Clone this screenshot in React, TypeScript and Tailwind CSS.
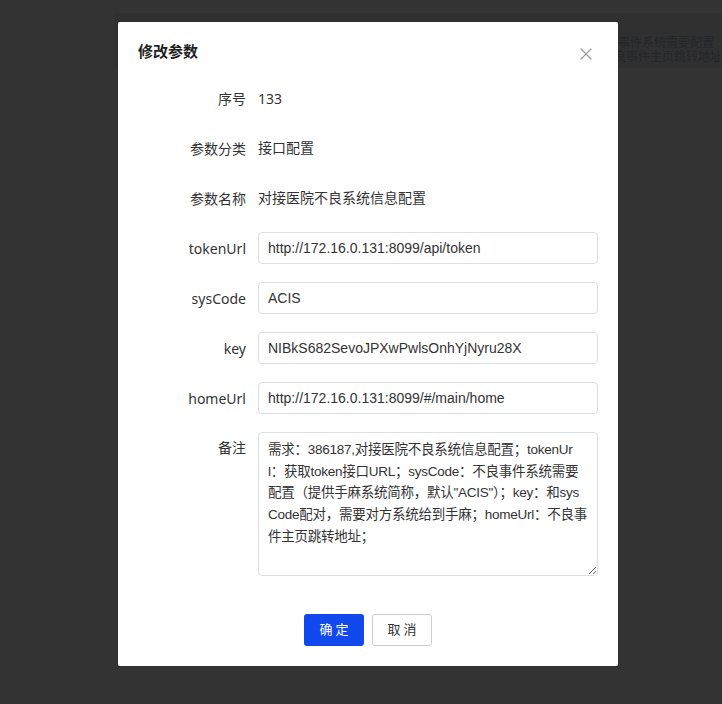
import { X } from "lucide-react";

const font = { fontFamily: '"Liberation Sans", "Noto Sans CJK SC", sans-serif' };
const labelFont = { fontFamily: '"Noto Sans", "Noto Sans CJK SC", sans-serif' };

const inputs = [
  { label: "tokenUrl", value: "http://172.16.0.131:8099/api/token" },
  { label: "sysCode", value: "ACIS" },
  { label: "key", value: "NIBkS682SevoJPXwPwlsOnhYjNyru28X" },
  { label: "homeUrl", value: "http://172.16.0.131:8099/#/main/home" },
];

// wrapped the way the original textarea wraps it
const remark = [
  "需求：386187,对接医院不良系统信息配置；tokenUr",
  "l：获取token接口URL；sysCode：不良事件系统需要",
  '配置（提供手麻系统简称，默认"ACIS"）；key：和sys',
  "Code配对，需要对方系统给到手麻；homeUrl：不良事",
  "件主页跳转地址；",
].join("\n");

export default function App() {
  return (
    <div className="relative w-[722px] h-[704px] overflow-hidden bg-[#333333]" style={font}>
      {/* dimmed page behind the mask */}
      <div className="ml-[115px] mt-[13px] h-[55px] bg-[#303030] flex">
        <div className="pl-[10px] pt-[7px] text-[18px] leading-6 text-[#1c1f27] whitespace-nowrap">
          对接医院不良系统信息配置
        </div>
        <div className="ml-auto w-[116px] pt-[23px] text-[12px] leading-[14px] text-[#24262b] whitespace-nowrap overflow-hidden">
          <div className="-ml-[12px]">不良事件系统需要配置</div>
          <div className="-ml-[4px]">不良事件主页跳转地址</div>
        </div>
      </div>

      {/* dialog */}
      <div className="absolute left-[118px] top-[22px] w-[500px] bg-white rounded-[2px]">
        <div className="px-5 pt-5">
          <h2 className="text-[15px] leading-5 font-bold text-[#1f1f1f]">修改参数</h2>
        </div>
        <button className="absolute right-[22px] top-[22px] text-[#9a9a9a]">
          <X size={20} strokeWidth={1.4} />
        </button>

        <div className="px-5 pt-5 text-[14px] text-[#333333]">
          <div className="flex items-center h-8 mb-[18px]">
            <div className="w-[120px] pr-3 text-right" style={labelFont}>序号</div>
            <div style={labelFont}>133</div>
          </div>
          <div className="flex items-center h-8 mb-[18px]">
            <div className="w-[120px] pr-3 text-right" style={labelFont}>参数分类</div>
            <div>接口配置</div>
          </div>
          <div className="flex items-center h-8 mb-[18px]">
            <div className="w-[120px] pr-3 text-right" style={labelFont}>参数名称</div>
            <div>对接医院不良系统信息配置</div>
          </div>

          {inputs.map((f) => (
            <div key={f.label} className="flex items-center h-8 mb-[18px]">
              <div className="w-[120px] pr-3 text-right" style={labelFont}>{f.label}</div>
              <input
                defaultValue={f.value}
                className="flex-1 h-8 px-[9px] border border-[#dcdfe6] rounded-[4px] text-[14px] text-[#333333] outline-none"
                style={font}
              />
            </div>
          ))}

          <div className="flex items-start mb-[18px]">
            <div className="w-[120px] pr-3 text-right leading-8" style={labelFont}>备注</div>
            <textarea
              defaultValue={remark}
              className="flex-1 h-[144px] pl-[9px] pr-[4px] pt-[6px] border border-[#dcdfe6] rounded-[4px] text-[13.5px] tracking-[-0.25px] leading-[21.7px] text-[#333333] outline-none whitespace-pre overflow-hidden"
              style={font}
            />
          </div>
        </div>

        <div className="flex justify-center gap-2 pt-5 pb-5">
          <button className="w-[60px] h-8 rounded-[3px] bg-[#1149ee] text-white text-[13px] tracking-[3px] pl-[3px]">
            确定
          </button>
          <button className="w-[60px] h-8 rounded-[3px] border border-[#c9ccd3] bg-white text-[#333333] text-[13px] tracking-[3px] pl-[3px]">
            取消
          </button>
        </div>
      </div>
    </div>
  );
}
